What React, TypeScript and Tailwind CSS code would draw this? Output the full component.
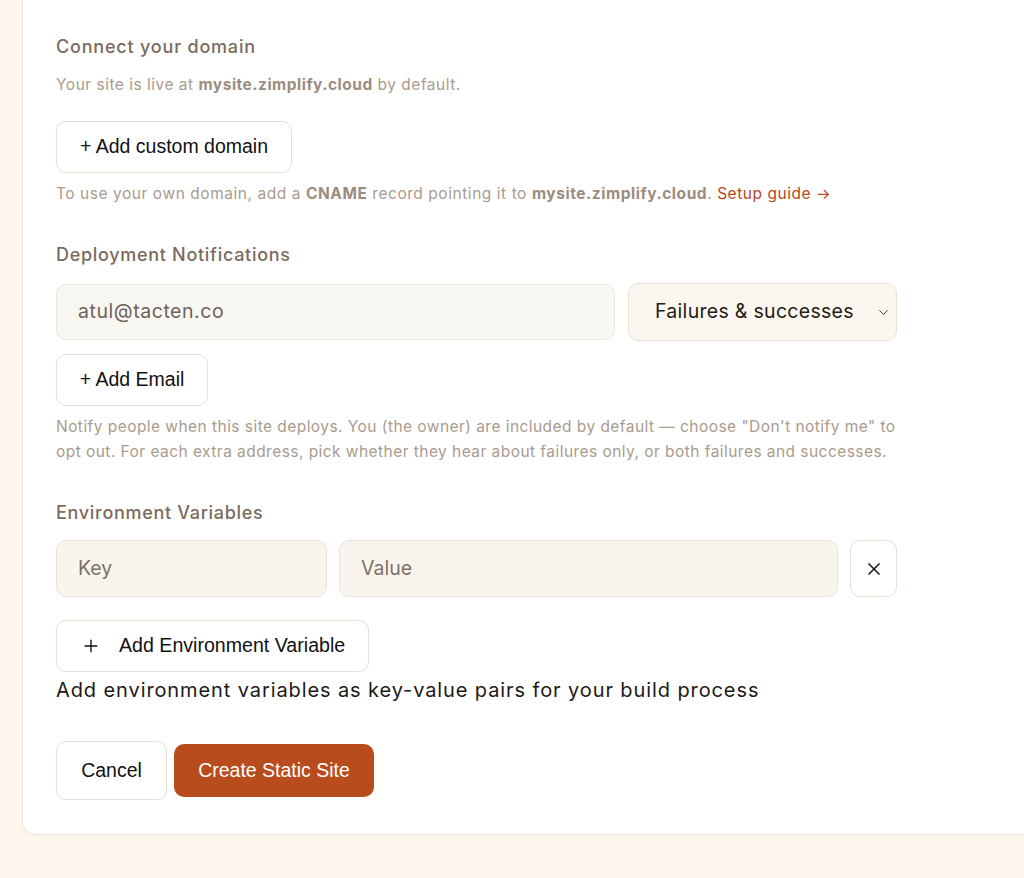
import { X, Plus, ChevronDown } from 'lucide-react';

const dm = "font-['Inter','Noto_Sans',sans-serif]";
const arial = "font-['Liberation_Sans',Arial,sans-serif]";

export default function App() {
  return (
    <div className="min-h-screen overflow-hidden bg-[#fdf6ec] pl-[22px] pb-[44px]">
      <div className="w-[1100px] bg-white border-l border-b border-[#ebe4d9] rounded-bl-[14px] pl-[33px] pt-[33px] pb-[34px]">
        <div className="w-[842px]">
          {/* Connect your domain */}
          <h3 className={`${dm} text-[18px] leading-[28px] font-medium tracking-[0.8px] text-[#7a6b5e]`}>
            Connect your domain
          </h3>
          <p className={`${dm} mt-[13px] text-[15.5px] leading-[22px] tracking-[0.5px] text-[#a99b8d]`}>
            Your site is live at <span className="font-bold text-[#9b8c7e]">mysite.zimplify.cloud</span> by default.
          </p>
          <button
            type="button"
            className={`${arial} mt-[25px] h-[52px] w-[236px] rounded-[10px] border border-[#e6ded2] bg-white text-[19.5px] text-[#111]`}
          >
            + Add custom domain
          </button>
          <p className={`${dm} mt-[10px] whitespace-nowrap text-[15.5px] leading-[22px] tracking-[0.55px] text-[#a99b8d]`}>
            To use your own domain, add a <span className="font-bold text-[#9b8c7e]">CNAME</span> record pointing it to{' '}
            <span className="font-bold text-[#9b8c7e]">mysite.zimplify.cloud</span>.{' '}
            <a className="text-[#b5471b]">Setup guide →</a>
          </p>

          {/* Deployment Notifications */}
          <h3 className={`${dm} mt-[36px] text-[18px] leading-[28px] font-medium tracking-[0.7px] text-[#7a6b5e]`}>
            Deployment Notifications
          </h3>
          <div className="mt-[14px] flex items-center gap-[13px]">
            <div
              className={`${dm} flex h-[56px] w-[559px] items-center rounded-[10px] border border-[#ece6dc] bg-[#f9f7f2] pl-[21px] text-[19.5px] tracking-[0.55px] text-[#6d625a]`}
            >
              atul@tacten.co
            </div>
            <div
              className={`${dm} flex h-[58px] w-[269px] items-center justify-between rounded-[10px] border border-[#eae1d3] bg-[#fbf6ef] pl-[26px] pr-[5px] text-[19.5px] tracking-[0.3px] text-[#231c16]`}
            >
              <span>Failures &amp; successes</span>
              <ChevronDown size={15} strokeWidth={1.6} className="text-[#3a322c]" />
            </div>
          </div>
          <button
            type="button"
            className={`${arial} mt-[13px] h-[52px] w-[152px] rounded-[10px] border border-[#e6ded2] bg-white text-[19.5px] text-[#111]`}
          >
            + Add Email
          </button>
          <p className={`${dm} mt-[8px] whitespace-nowrap text-[15.5px] leading-[25px] tracking-[0.45px] text-[#a99b8d]`}>
            Notify people when this site deploys. You (the owner) are included by default — choose "Don't notify me" to
            <br />
            opt out. For each extra address, pick whether they hear about failures only, or both failures and successes.
          </p>

          {/* Environment Variables */}
          <h3 className={`${dm} mt-[35px] text-[18px] leading-[28px] font-medium tracking-[0.7px] text-[#7a6b5e]`}>
            Environment Variables
          </h3>
          <div className="mt-[13px] flex items-center gap-[12px]">
            <div
              className={`${dm} flex h-[57px] w-[271px] items-center rounded-[10px] border border-[#ebe3d6] bg-[#f9f5ee] pl-[21px] text-[19.5px] text-[#7c7168]`}
            >
              Key
            </div>
            <div
              className={`${dm} flex h-[57px] w-[499px] items-center rounded-[10px] border border-[#ebe3d6] bg-[#f9f5ee] pl-[21px] text-[19.5px] text-[#7c7168]`}
            >
              Value
            </div>
            <button
              type="button"
              className="flex h-[57px] w-[47px] items-center justify-center rounded-[10px] border border-[#e6ded2] bg-white text-[#1a1a1a]"
            >
              <X size={20} strokeWidth={2} />
            </button>
          </div>
          <button
            type="button"
            className={`${arial} mt-[23px] flex h-[52px] w-[313px] items-center rounded-[10px] border border-[#e6ded2] bg-white pl-[24px] text-[19.6px] text-[#111]`}
          >
            <Plus size={20} strokeWidth={1.6} className="mr-[18px]" />
            Add Environment Variable
          </button>
          <p className={`${dm} mt-[4px] whitespace-nowrap text-[20px] leading-[28px] tracking-[0.9px] text-[#1d1915]`}>
            Add environment variables as key-value pairs for your build process
          </p>

          {/* Actions */}
          <div className="mt-[37px] flex items-center gap-[7px]">
            <button
              type="button"
              className={`${arial} h-[59px] w-[111px] rounded-[10px] border border-[#e6ded2] bg-white text-[19.5px] text-[#111]`}
            >
              Cancel
            </button>
            <button
              type="button"
              className={`${arial} h-[53px] w-[200px] rounded-[10px] bg-[#b84c1c] text-[19.5px] text-white`}
            >
              Create Static Site
            </button>
          </div>
        </div>
      </div>
    </div>
  );
}
